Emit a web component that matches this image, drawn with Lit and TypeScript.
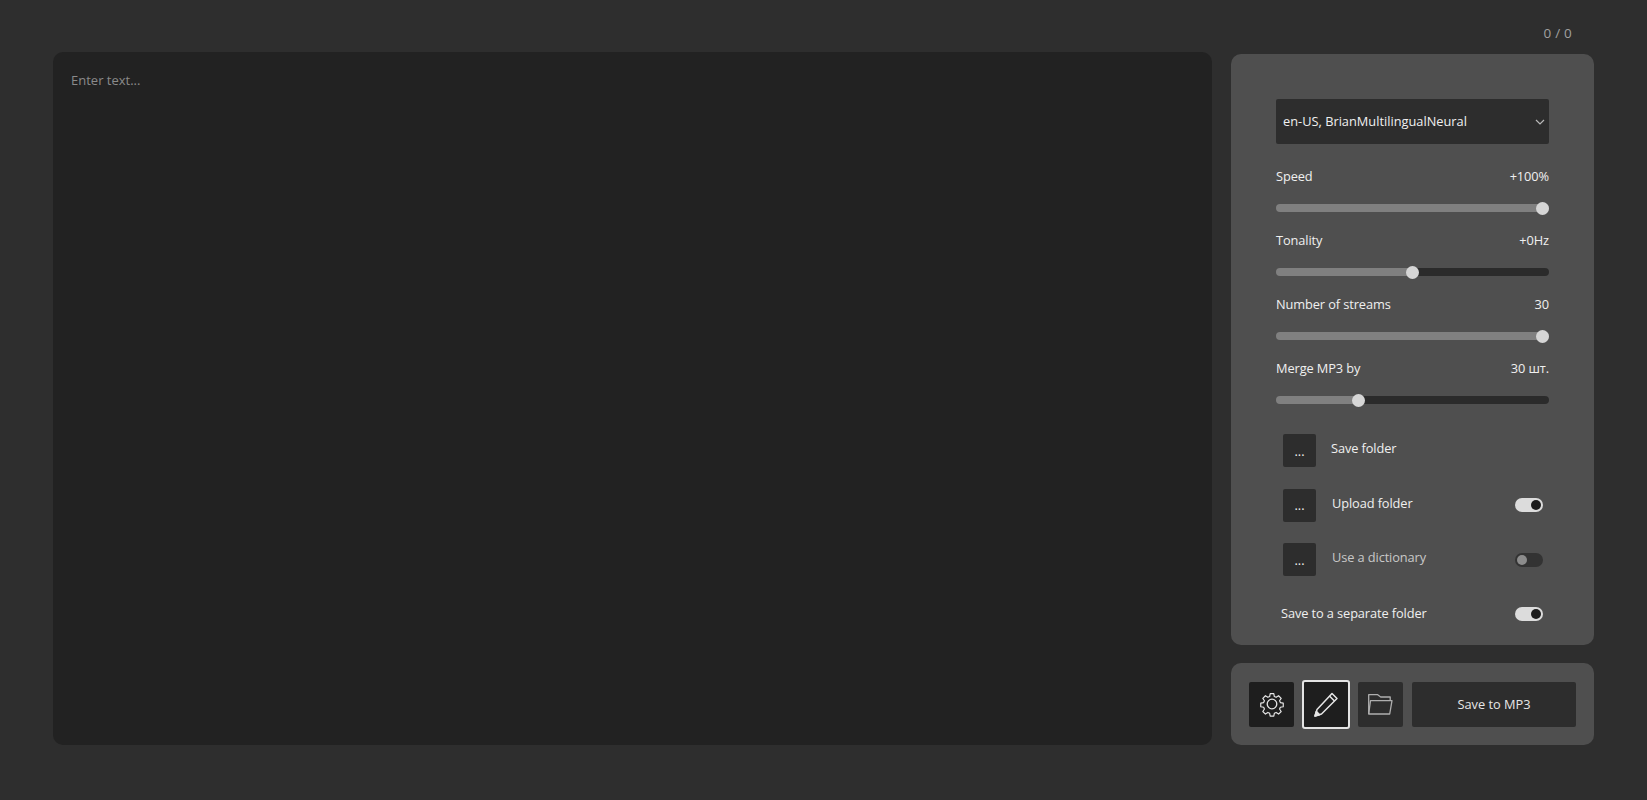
import { LitElement, html, css } from "lit";
import { customElement } from "lit/decorators.js";

const sliders = [
  { label: "Speed", value: "+100%", min: -100, max: 100, now: 100 },
  { label: "Tonality", value: "+0Hz", min: -100, max: 100, now: 0 },
  { label: "Number of streams", value: "30", min: 1, max: 30, now: 30 },
  { label: "Merge MP3 by", value: "30 шт.", min: 1, max: 100, now: 30 },
];

@customElement("app-root")
export class AppRoot extends LitElement {
  static styles = css`
    :host {
      display: block;
      height: 800px;
      box-sizing: border-box;
      overflow: hidden;
      padding: 23px 53px 0;
      background: #2e2e2e;
      color: #f0f0f0;
      font-family: "Open Sans", "Noto Sans", sans-serif;
      font-size: 12.8px;
      letter-spacing: -0.1px;
    }
    .counter {
      height: 29px;
      line-height: 20px;
      padding-right: 22px;
      text-align: right;
      color: #a0a0a0;
      font-size: 13.5px;
      letter-spacing: 0.2px;
    }
    .main {
      display: grid;
      grid-template-columns: 1159px 363px;
      column-gap: 19px;
      height: 693px;
    }
    .editor {
      display: block;
      width: 100%;
      height: 100%;
      box-sizing: border-box;
      padding: 19px 18px;
      border: none;
      border-radius: 10px;
      outline: none;
      resize: none;
      background: #222222;
      color: #ddd;
      font: inherit;
      font-size: 13px;
      letter-spacing: 0;
      line-height: 18px;
    }
    .editor::placeholder {
      color: #8a8a8a;
      opacity: 1;
    }
    .side {
      display: flex;
      flex-direction: column;
      gap: 18px;
      padding-top: 2px;
    }
    .panel {
      background: #4f4f4f;
      border-radius: 10px;
    }
    .settings {
      height: 591px;
      box-sizing: border-box;
      padding: 45px 45px 0;
    }
    .voice {
      display: block;
      width: 100%;
      height: 45px;
      padding: 0 7px 2px;
      border: none;
      border-radius: 2px;
      outline: none;
      appearance: none;
      background: #2d2d2d;
      color: #f0f0f0;
      font: inherit;
      letter-spacing: 0;
    }
    .voice-wrap {
      position: relative;
      margin-bottom: 22px;
    }
    .chevron {
      position: absolute;
      right: 3px;
      top: 17px;
      width: 12px;
      height: 12px;
      color: #b8b8b8;
    }
    .slider {
      height: 64px;
    }
    .slider-head {
      display: flex;
      justify-content: space-between;
      line-height: 20px;
    }
    input[type="range"] {
      display: block;
      width: 100%;
      height: 14px;
      margin: 15px 0 0;
      appearance: none;
      background: transparent;
    }
    input[type="range"]::-webkit-slider-runnable-track {
      height: 8px;
      border-radius: 4px;
      background: linear-gradient(
        to right,
        #808080 var(--fill),
        #2b2b2b var(--fill)
      );
    }
    input[type="range"]::-webkit-slider-thumb {
      appearance: none;
      width: 13px;
      height: 13px;
      margin-top: -2.5px;
      border-radius: 50%;
      background: #d6d6d6;
    }
    .rows {
      display: flex;
      flex-direction: column;
      padding-top: 12px;
    }
    .row {
      display: flex;
      align-items: center;
      height: 33px;
      margin-bottom: 21.5px;
      padding: 0 6px 0 7px;
    }
    .dots {
      flex: none;
      width: 33px;
      height: 33px;
      padding: 0;
      border: none;
      border-radius: 2px;
      background: #2d2d2d;
      color: #f0f0f0;
      font: inherit;
    }
    .row-label {
      flex: 1;
      padding: 0 0 5px 16px;
    }
    .row-label.first {
      padding-left: 15px;
    }
    .row.off .row-label {
      color: #c8c8c8;
    }
    .row.plain {
      padding-left: 5px;
    }
    .row.plain .row-label {
      padding-left: 0;
      padding-bottom: 3px;
    }
    .toggle {
      flex: none;
      display: flex;
      align-items: center;
      justify-content: flex-end;
      width: 28px;
      height: 14px;
      box-sizing: border-box;
      padding: 0 2px;
      border-radius: 7px;
      background: #dcdcdc;
    }
    .toggle i {
      width: 10px;
      height: 10px;
      border-radius: 50%;
      background: #1c1c1c;
    }
    .toggle.off {
      justify-content: flex-start;
      background: #333333;
    }
    .toggle.off i {
      background: #8c8c8c;
    }
    .actions {
      display: flex;
      align-items: center;
      gap: 8px;
      height: 82px;
      box-sizing: border-box;
      padding: 0 18px;
    }
    .actions button {
      display: flex;
      align-items: center;
      justify-content: center;
      flex: none;
      width: 45px;
      height: 45px;
      padding: 0;
      border: none;
      border-radius: 2px;
      background: #2d2d2d;
      color: #e6e6e6;
      font: inherit;
      letter-spacing: 0;
    }
    .actions button.dark {
      background: #1e1e1e;
    }
    .actions button.current {
      width: 48px;
      height: 49px;
      border: 2px solid #e4e4e4;
      border-radius: 3px;
      background: #1e1e1e;
    }
    .actions button.muted {
      color: #aeaeae;
    }
    .actions button.save {
      flex: 1;
      margin-left: 1px;
    }
    svg {
      display: block;
      fill: none;
      stroke: currentColor;
    }
  `;

  private renderSlider(s: (typeof sliders)[number]) {
    const pct = ((s.now - s.min) / (s.max - s.min)) * 100;
    return html`
      <div class="slider">
        <div class="slider-head">
          <span>${s.label}</span><span>${s.value}</span>
        </div>
        <input
          type="range"
          min=${s.min}
          max=${s.max}
          .value=${String(s.now)}
          style="--fill:${pct}%"
        />
      </div>
    `;
  }

  render() {
    return html`
      <div class="counter">0 / 0</div>
      <div class="main">
        <textarea class="editor" placeholder="Enter text..."></textarea>
        <div class="side">
          <div class="panel settings">
            <div class="voice-wrap">
              <select class="voice">
                <option>en-US, BrianMultilingualNeural</option>
              </select>
              <svg class="chevron" viewBox="0 0 12 12" stroke-width="1.2">
                <path d="M2 4l4 4 4-4" />
              </svg>
            </div>
            ${sliders.map((s) => this.renderSlider(s))}
            <div class="rows">
              <div class="row">
                <button class="dots">...</button>
                <span class="row-label first">Save folder</span>
              </div>
              <div class="row">
                <button class="dots">...</button>
                <span class="row-label">Upload folder</span>
                <span class="toggle"><i></i></span>
              </div>
              <div class="row off">
                <button class="dots">...</button>
                <span class="row-label">Use a dictionary</span>
                <span class="toggle off"><i></i></span>
              </div>
              <div class="row plain">
                <span class="row-label">Save to a separate folder</span>
                <span class="toggle"><i></i></span>
              </div>
            </div>
          </div>
          <div class="panel actions">
            <button class="dark" aria-label="Settings">
              <svg width="26" height="26" viewBox="0 0 26 26" stroke-width="1.3" stroke-linejoin="round">
                <circle cx="13" cy="13" r="4.8" />
                <path
                  d="M11 1.5h4l.6 3.2 2 .9 2.7-1.8 2.9 2.9-1.8 2.7.9 2 3.2.6v4l-3.2.6-.9 2 1.8 2.7-2.9 2.9-2.7-1.8-2 .9-.6 3.2h-4l-.6-3.2-2-.9-2.7 1.8-2.9-2.9 1.8-2.7-.9-2-3.2-.6v-4l3.2-.6.9-2-1.8-2.7 2.9-2.9 2.7 1.8 2-.9z"
                  transform="translate(1.3 1.3) scale(.9)"
                />
              </svg>
            </button>
            <button class="current" aria-label="Editor">
              <svg width="26" height="26" viewBox="0 0 26 26" stroke-width="1.5" stroke-linejoin="round">
                <path d="M19 2.5l5 5L8.5 23 2 25l2-6.5z" />
                <path d="M16.5 5l5 5" />
                <path d="M2 25l1.3-4.6 3.3 3.3z" fill="currentColor" />
              </svg>
            </button>
            <button class="muted" aria-label="Open folder">
              <svg width="25" height="21" viewBox="0 0 25 21" stroke-width="1.3" stroke-linejoin="round">
                <path d="M.7 20V.7h9l3 2.3h9.5v3.7" />
                <path d="M2.5 6.7H24L21.7 20H.7z" />
              </svg>
            </button>
            <button class="save">Save to MP3</button>
          </div>
        </div>
      </div>
    `;
  }
}
